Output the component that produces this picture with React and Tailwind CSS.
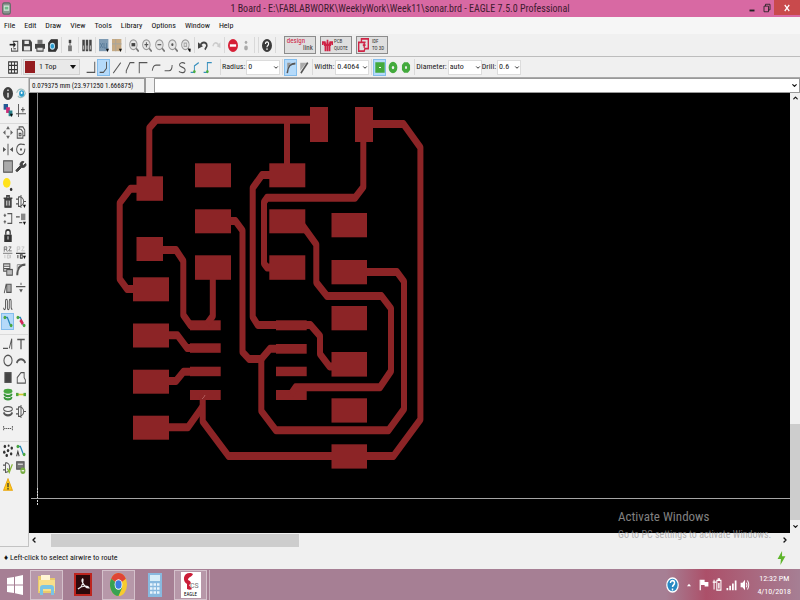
import React from "react";
import {
  ChevronDown,
  ChevronLeft,
  ChevronRight,
  ChevronUp,
  Wrench,
} from "lucide-react";

const uiFont = "font-['Roboto_Condensed','Open_Sans_Condensed','Roboto',sans-serif]";

const menus = [
  "File",
  "Edit",
  "Draw",
  "View",
  "Tools",
  "Library",
  "Options",
  "Window",
  "Help",
];

// x, y, width, height
const pads = [
  [310, 107, 18, 35],
  [355, 107, 18, 35],
  [136.5, 176.3, 26.5, 24.5],
  [136.5, 237, 26.5, 24],
  [133, 277.3, 36, 24],
  [133, 323.5, 36, 24],
  [133, 369.7, 36, 24],
  [133, 415.7, 36, 24],
  [195, 163.3, 36, 24],
  [195, 209.3, 36, 24],
  [195, 255.3, 36, 24.5],
  [269.3, 163.3, 36, 24],
  [269.3, 209.3, 36, 24],
  [269.3, 255.3, 36, 24.5],
  [331.5, 213, 35.5, 24.3],
  [331.5, 260, 35.5, 24.3],
  [331.5, 306, 35.5, 24.3],
  [331.5, 352, 35.5, 24.6],
  [331.5, 398.3, 35.5, 24.3],
  [331.5, 444.3, 35.5, 24.3],
  [190, 320.3, 30.7, 10],
  [190, 343.3, 30.7, 9.5],
  [190, 366.7, 30.7, 9.5],
  [190, 390, 30.7, 10],
  [276, 320.3, 30.7, 10],
  [276, 344, 30.7, 9.7],
  [276, 366.7, 30.7, 9.5],
  [276, 390, 30.7, 10],
];

const traces = [
  [[149.3, 177], [149.3, 128], [156.5, 119.7], [311, 119.7]],
  [[287, 120], [287, 165]],
  [[138, 188.7], [130.5, 188.7], [119.7, 203], [119.7, 279], [127, 289], [134, 289]],
  [[162, 250], [176, 250], [183.3, 261], [183.3, 315], [190.5, 325.3], [193, 325.3]],
  [[212.8, 279], [212.8, 316], [207, 324]],
  [[230, 221], [235.5, 221], [242.5, 230.5], [242.5, 352], [249, 359], [261.3, 359], [270, 348.7], [278, 348.7]],
  [[261.3, 358], [261.3, 411], [276, 430.3], [388.5, 430.3], [404, 409], [404, 281.5], [397, 272], [366, 272]],
  [[271, 175], [262, 175], [252.7, 188], [252.7, 317], [257.7, 325], [310.5, 325], [320, 336], [320, 354], [329.5, 366.5], [333, 366.5]],
  [[363.3, 141], [363.3, 187], [355, 197.8], [267, 197.8], [264, 202], [264, 263.5], [267, 267.5], [271, 267.5]],
  [[303, 226], [316.3, 244.5], [316.3, 282.5], [327, 296], [381.5, 296], [391, 308.5], [391, 371], [380, 387.3], [295.5, 387.3], [291, 394]],
  [[372, 124], [403.5, 124], [420.4, 147.5], [420.4, 419.5], [393.5, 456], [228.5, 456], [202.7, 421.5], [202.7, 396]],
  [[168, 427.3], [188, 427.3], [202.7, 406.5]],
  [[168, 335.3], [177.5, 335.3], [187, 348], [192, 348]],
  [[168, 381], [176, 381], [183.5, 371.7], [192, 371.7]],
];

const SX = 0.75;
const toPoints = (pts) => pts.map(([x, y]) => `${x / SX},${y}`).join(" ");

function Board() {
  return (
    <svg
      viewBox="29 93 761 440"
      preserveAspectRatio="xMinYMin meet"
      className="block h-full w-full"
      role="img"
      aria-label="sonar.brd"
    >
      <path d="M37.5 93V498" stroke="#8a8a8a" />
      <path d="M37.5 488V505" stroke="#ddd" strokeDasharray="2 1" />
      <path d="M31 498.5H790" stroke="#a5a5a5" />
      <g fill="#8c2426">
        {pads.map(([x, y, w, h]) => (
          <rect key={`${x}-${y}`} x={x} y={y} width={w} height={h} />
        ))}
      </g>
      <g
        transform={`scale(${SX} 1)`}
        fill="none"
        stroke="#8c2426"
        strokeWidth="8"
        strokeLinejoin="round"
      >
        {traces.map((pts, i) => (
          <polyline key={i} points={toPoints(pts)} />
        ))}
      </g>
      <path d="M202 399L204 397L205 395" stroke="#b66" strokeWidth="0.8" fill="none" />
    </svg>
  );
}

function Ico({ children, className = "h-[13px] w-[13px]" }) {
  return (
    <svg
      viewBox="0 0 16 16"
      preserveAspectRatio="none"
      className={className}
      fill="none"
      stroke="#555"
      strokeWidth="1.5"
      aria-hidden="true"
    >
      {children}
    </svg>
  );
}

const more = <path d="M11 12h5l-2.500 4z" fill="#111" stroke="none" />;

const magnifier = (inner) => (
  <>
    <circle cx="7" cy="7" r="6" stroke="#999" strokeWidth="1.400" fill="#e6e6e6" />
    <path d="M11.500 11.500L15.500 15.500" stroke="#777" strokeWidth="2.400" />
    {inner}
  </>
);

const mainTools = [
  ["Open", <><path d="M6 3H14V15H4V11" /><path d="M1 7H9" stroke="#222" strokeWidth="2" /><path d="M7 3L11 7L7 11z" fill="#222" stroke="none" /><path d="M7 12h4" /></>],
  ["Save", <><path d="M0 1H13L16 4V15H0z" fill="#444" stroke="none" /><path d="M4 2H11V6H4zM3 9H13V14H3z" fill="#e8e8e8" stroke="none" /></>],
  ["Print", <><path d="M4 1H12V6H4z" fill="#777" stroke="none" /><path d="M0 6H16V12H0z" fill="#444" stroke="none" /><path d="M3 10H13V15H3z" fill="#ddd" stroke="#444" /></>],
  ["CAM", <><path d="M1 5L5 1H15V11L12 15H1z" fill="#333" stroke="#333" /><circle cx="7" cy="9" r="3.500" fill="#2a9dd0" stroke="#bde" /></>],
  null,
  ["Board", <><rect x="6" y="1" width="4" height="4" fill="#444" stroke="none" /><rect x="5" y="8" width="6" height="7" fill="#777" stroke="none" /><path d="M8 5V8" /></>],
  null,
  ["Library", <><path d="M2.500 1V15M8 1V15M13.500 1V15" stroke="#444" strokeWidth="4" /><path d="M2.500 8V13M8 8V13M13.500 8V13" stroke="#bbb" /></>],
  null,
  ["Script", <><rect width="15" height="15" x="0" y="0" fill="#7f9bb3" stroke="none" /><path d="M2 5L6 11M6 5L2 11M8 5V11H12V5" stroke="#4e7392" strokeWidth="1" />{more}</>],
  ["Run ULP", <><rect width="15" height="15" x="0" y="0" fill="#c6aa83" stroke="none" /><path d="M0 6H15M6 0V15" stroke="#aaa69b" />{more}</>],
  null,
  ["Fit", magnifier(<rect x="4" y="5" width="6" height="4" fill="#444" stroke="none" />)],
  ["Zoom in", magnifier(<path d="M4 7H10M7 4V10" />)],
  ["Zoom out", magnifier(<path d="M4 7H10" />)],
  ["Redraw", magnifier(<circle cx="7" cy="7" r="1" fill="#444" />)],
  ["Select", magnifier(<><path d="M5 5H9V9H5z" stroke="#aaa" />{more}</>)],
  null,
  ["Undo", <><path d="M4 7C9 2 15 5 14 9L11 13" stroke="#444" strokeWidth="2.500" /><path d="M0 4V12L8 9z" fill="#444" stroke="none" /></>],
  ["Redo", <><path d="M12 7C8 3 4 5 3 9" stroke="#ccc" strokeWidth="2" /><path d="M15 4V11L9 9z" fill="#ccc" stroke="none" /></>],
  null,
  ["Stop", <><circle cx="8" cy="8" r="8" fill="#d61f36" stroke="none" /><path d="M3 8H13" stroke="#fff" strokeWidth="3" /></>],
  ["Go", <><circle cx="8" cy="4" r="2" fill="#aaa" stroke="none" /><circle cx="8" cy="11" r="3" fill="#aaa" stroke="none" /></>],
  null,
  null,
  ["Help", <><circle cx="8" cy="8" r="8" fill="#3b3b3b" stroke="none" /><path d="M5.500 6C5.500 2.500 11 3 10.500 6C10.500 8 8 8 8 10M8 11.500V13.500" stroke="#fff" strokeWidth="1.800" /></>],
];

const bends = [
  ["Bend 0", <path d="M1 14H14V1" />],
  ["Bend 1", <path d="M1 14H7L12 9V1" />, true],
  ["Bend 2", <path d="M2 15L14 2" />],
  ["Bend 3", <path d="M2 15V12L8 2H15" />],
  ["Bend 4", <path d="M2 15V2H15" />],
  ["Bend 5", <path d="M2 12C3 7 5 5 8 5H15" />],
  ["Bend 6", <path d="M1 12H8C12 12 13 9 13 5" />],
  ["Bend 7", <path d="M13 3C9 1 4 2 4 5C4 8 13 7 13 11C13 15 7 15 3 13" />],
  ["Bend 8", <><path d="M1 14H7V6L14 2" stroke="#368fbd" /><circle cx="7" cy="13" r="2" fill="#4caf3f" stroke="none" /></>],
  ["Bend 9", <><path d="M1 14H7V2H14" stroke="#368fbd" /><circle cx="7" cy="13" r="2" fill="#4caf3f" stroke="none" /></>],
];

const route = (
  <>
    <path d="M3 3H7L12 13" stroke="#2585b8" strokeWidth="2" />
    <circle cx="3" cy="3" r="2.200" fill="#4ba73e" stroke="none" />
    <circle cx="13" cy="13" r="2.200" fill="#4ba73e" stroke="none" />
  </>
);

const gate = (
  <path d="M4 2V14C15 14 15 2 4 2M0 5H4M0 11H4M12 8H16M8 0V16" />
);

const sideGroups = [
  {
    size: "h-[34px]",
    tools: [
      ["Info", <><circle cx="8" cy="8" r="8" fill="#3d3d3d" stroke="none" /><path d="M8 3V5M8 7V13" stroke="#fff" strokeWidth="2" /></>],
      ["Show", <><path d="M1 7C4 1 13 1 15 8C12 14 5 14 3 11" stroke="#9bb" /><circle cx="9" cy="8" r="4" fill="#2a9bcb" stroke="none" /><circle cx="9" cy="7" r="1.500" fill="#fff" stroke="none" /></>],
      ["Display", <><rect x="1" y="0" width="7" height="7" fill="#235a94" stroke="none" /><rect x="5" y="4" width="6" height="7" fill="#cd2c79" stroke="none" /><rect x="9" y="8" width="6" height="7" fill="#27818a" stroke="none" />{more}</>],
      ["Mark", <path d="M4 0V16M0 12H16M11 4V10M8 7H14" />],
    ],
  },
  {
    size: "h-[207px]",
    tools: [
      ["Move", <path d="M8 0L11 4H5zM8 16L5 12H11zM0 8L4 5V11zM16 8L12 5V11z" fill="#666" stroke="none" />],
      ["Copy", <path d="M5 4V1H11L14 5V12H11M2 4H8L11 7V15H2zM5 9H8V12H5z" />],
      ["Mirror", <><path d="M8 1V15" /><path d="M0 5V11L5 8zM16 5V11L11 8z" fill="#555" stroke="none" /></>],
      ["Rotate", <><path d="M14 7A6.500 6.500 0 1 1 9 1.500L14 2" /><circle cx="8" cy="8" r="1.500" fill="#555" stroke="none" /></>],
      ["Group", <rect x="1" y="1" width="14" height="14" fill="#aaa" />],
      ["Change", <Wrench className="h-[13px] w-[12px] fill-[#444] text-[#444]" strokeWidth={2} />],
      ["Paste", <><circle cx="6" cy="6" r="6" fill="#ffe21b" stroke="none" /><circle cx="13" cy="14" r="2" fill="#333" stroke="none" /></>],
      null,
      ["Delete", <><path d="M1 4H15M6 4V1H10V4" stroke="#444" strokeWidth="2" /><path d="M3 5H13V15H3z" fill="#555" stroke="#333" /><path d="M6 7V13M10 7V13" stroke="#ddd" /></>],
      ["Add", <>{gate}{more}</>],
      ["Pinswap", <path d="M7 2H14V14H7M3 2V6M3 10V14M1 4H5M1 12H5" />],
      ["Replace", <><rect x="8" y="2" width="7" height="8" fill="#888" stroke="none" /><path d="M0 6H6M5 13H10" />{more}</>],
      ["Lock", <><path d="M4.500 7V4C4.500 0 11.500 0 11.500 4V7" stroke="#333" strokeWidth="2" /><rect x="2" y="7" width="12" height="9" fill="#333" stroke="none" /><path d="M8 9V13" stroke="#eee" /></>],
      null,
      ["Name", <><path d="M2 7V1H6V4H2M5 4L7 7M9 1H13L9 6H14M0 9H15" strokeWidth="1" /><path d="M3 11V15M7 11H10V15H7zM12 11V15" strokeWidth="1" stroke="#bbb" /></>],
      ["Value", <><path d="M2 7V1H6V4H2M9 1H13L9 6H14" stroke="#bbb" strokeWidth="1" /><path d="M0 9H15M3 11V15M7 11H10V15H7z" stroke="#444" />{more}</>],
      ["Smash", <><path d="M1 1H11V10H1zM1 4H11M1 7H11" /><rect x="6" y="8" width="9" height="7" fill="#bbb" /></>],
      ["Miter", <><path d="M2 15C2 6 7 2 15 2" strokeWidth="3" /><path d="M2 2H8M2 2V9" stroke="#999" /></>],
      ["Split", <path d="M2 15L5 4H13V14H6V5" fill="#aaa" />],
      ["Optimize", <><path d="M0 7H15M8 2V5" /><path d="M5 10H11L8 14z" fill="#555" stroke="none" /></>],
      ["Meander", <path d="M1 12C1 15 4 15 4 12V4C4 1 7 1 7 4V12C7 15 10 15 10 12V4C10 1 13 1 13 4V11C13 13 14 14 15 14" />],
      null,
      ["Route", route, true],
      ["Ripup", <>{route}<path d="M7 6L11 11" stroke="#d52955" strokeWidth="4" /></>],
    ],
  },
  {
    size: "h-[103px]",
    tools: [
      ["Wire", <path d="M0 14H8M10 14L14 2V15" />],
      ["Text", <path d="M2 3H14M8 3V15" strokeWidth="2" />],
      ["Circle", <circle cx="8" cy="8" r="6.500" strokeWidth="1.700" />],
      ["Arc", <path d="M1 11C4 5 12 5 15 11" strokeWidth="2.500" />],
      ["Rect", <rect x="3" y="2" width="10" height="12" fill="#444" />],
      ["Polygon", <path d="M2 15V8L8 2H13V8L15 11V15z" />],
      ["Via", <><ellipse cx="8" cy="4" rx="7" ry="3" fill="#49a841" stroke="none" /><path d="M2 7C3 11 13 11 14 7M2 11C3 15 13 15 14 11" stroke="#39963b" strokeWidth="2.500" /></>],
      ["Signal", <><path d="M3 8H13" stroke="#d2ca2d" strokeWidth="2" /><rect x="0" y="6" width="4" height="4" fill="#53a53a" stroke="none" /><rect x="12" y="6" width="4" height="4" fill="#53a53a" stroke="none" /></>],
      ["Hole", <><ellipse cx="8" cy="5" rx="7" ry="3" /><path d="M1 9C3 14 13 14 15 9" strokeWidth="2.500" /></>],
      ["Attribute", gate],
      ["Dimension", <path d="M1 5V11M15 5V11M2 8H14" strokeDasharray="2 1" />],
      null,
    ],
  },
  {
    size: "h-[52px]",
    tools: [
      ["Ratsnest", <g fill="#333" stroke="none"><circle cx="3" cy="3" r="2" /><circle cx="9" cy="2" r="1.500" /><circle cx="14" cy="5" r="2" /><circle cx="8" cy="8" r="2" /><circle cx="2" cy="10" r="2" /><circle cx="6" cy="14" r="2" /><circle cx="13" cy="12" r="2" /></g>],
      ["Autorouter", <>{route}<path d="M1 15L3 9L5 15" stroke="#333" /></>],
      ["ERC", <><path d="M4 2V14C13 14 13 2 4 2M0 5H4M0 11H4" /><path d="M7 9L10 14L15 4" stroke="#87b733" strokeWidth="2" /></>],
      ["DRC", <><rect x="1" y="1" width="12" height="9" fill="#777" /><path d="M3 4H11" stroke="#ddd" /><circle cx="11" cy="12" r="4" fill="#76ac42" stroke="none" /><path d="M9 12H13" stroke="#fff" /></>],
      ["Errors", <><path d="M8 1L15 15H1z" fill="#ffcd16" stroke="#e9a613" /><path d="M8 6V11M8 12V14" stroke="#333" strokeWidth="2" /></>],
    ],
  },
];

function Tool({ tool, className }) {
  if (!tool) return <span className={className} />;
  const [label, art, active] = tool;
  const isIcon = typeof art.type === "object";
  return (
    <button
      type="button"
      aria-label={label}
      title={label}
      className={`flex items-center justify-center ${className} ${
        active ? "bg-[#b5dafa] ring-1 ring-inset ring-[#84bdec]" : ""
      }`}
    >
      {isIcon ? art : <Ico className="h-[13px] w-[10px]">{art}</Ico>}
    </button>
  );
}

function Separator() {
  return (
    <span className="flex h-full w-1 shrink-0 items-center justify-center">
      <span className="h-4 w-px bg-[#d9d9d9]" />
    </span>
  );
}

function Field({ label, value, className }) {
  return (
    <label className="flex items-center gap-px">
      {label}
      <span className={`relative flex ${className}`}>
        <select className="h-[15px] w-full appearance-none border border-[#dcdcdc] bg-white pl-px">
          <option>{value}</option>
        </select>
        <ChevronDown
          className="pointer-events-none absolute top-1 right-px h-[7px] w-[6px] text-[#333]"
          strokeWidth={4}
        />
      </span>
    </label>
  );
}

function TitleBar() {
  return (
    <header className="flex h-[17px] shrink-0 items-center bg-[#d869a3] text-[#3f1c30]">
      <div className="flex w-14 pl-[2px]">
        <Ico className="h-[13px] w-[9px]">
          <rect x="1" y="1" width="14" height="14" rx="3" fill="#8a9590" stroke="#5c6b64" />
          <path d="M4 5H12V10H4z" fill="#72b98a" stroke="#d4e8dc" />
        </Ico>
      </div>
      <h1 className="flex-1 text-center text-[10px] leading-4">
        1 Board - E:\FABLABWORK\WeeklyWork\Week11\sonar.brd - EAGLE 7.5.0
        Professional
      </h1>
      <div className="flex h-full w-14 items-start">
        <button type="button" aria-label="Minimize" className="flex h-[15px] w-[15px] items-center justify-center">
          <Ico className="h-[10px] w-[10px]"><path d="M4 12H12" stroke="#222" strokeWidth="3" /></Ico>
        </button>
        <button type="button" aria-label="Restore" className="flex h-[15px] w-[15px] items-center justify-center">
          <Ico className="h-[10px] w-[8px]"><path d="M2 5H11V14H2zM5 5V2H14V11H11" stroke="#222" /></Ico>
        </button>
        <button type="button" aria-label="Close" className="flex h-[15px] w-[26px] items-center justify-center bg-[#c94a4c]">
          <Ico className="h-[8px] w-[6px]"><path d="M2 2L14 14M14 2L2 14" stroke="#fff" strokeWidth="3.500" /></Ico>
        </button>
      </div>
    </header>
  );
}

function MainToolbar() {
  return (
    <div className="flex h-[23px] shrink-0 items-center border-b border-[#bdbdbd] bg-[#f0f0f0] pl-[7px]">
      {mainTools.map((tool, i) =>
        tool ? <Tool key={i} tool={tool} className="h-[15px] w-[13px]" /> : <Separator key={i} />
      )}
      <Separator />
      <div className="ml-[7px] flex gap-1 text-[5px] leading-[7px] whitespace-nowrap text-[#333]">
        <button type="button" className="h-[18px] w-[32px] border border-[#8c8c8c] bg-[#dfdfdf] text-[7px]">
          <span className="block pr-2 text-[#cf2345]">design</span>
          <span className="block pl-4">link</span>
        </button>
        <button type="button" className="flex h-[18px] w-[32px] items-center gap-px border border-[#8c8c8c] bg-[#dfdfdf] pl-px text-left">
          <Ico className="h-[14px] w-[11px] shrink-0">
            <path d="M1 8V5H4V8H12V5H15V8M5 15V5M8 15V2M11 15V5" stroke="#cf2345" strokeWidth="2.500" />
          </Ico>
          <span>
            <span className="block">PCB</span>
            <span className="block">QUOTE</span>
          </span>
        </button>
        <button type="button" className="flex h-[18px] w-[32px] items-center gap-[3px] border border-[#8c8c8c] bg-[#dfdfdf] pl-px text-left">
          <Ico className="h-[14px] w-[11px] shrink-0">
            <path d="M5 1H15V12H10L9 15H1V5H5zM5 5H11M7 8H11M9 4V11" stroke="#cf2345" strokeWidth="2" />
          </Ico>
          <span>
            <span className="block">IDF</span>
            <span className="block">TO 3D</span>
          </span>
        </button>
      </div>
    </div>
  );
}

function RouteToolbar() {
  return (
    <div className="flex h-[21px] shrink-0 items-center border-b border-[#a9a9a9] bg-[#f0f0f0] pl-[6px] text-[8px] leading-3 text-[#222]">
      <Tool
        tool={["Grid", <path d="M1 1H15V15H1zM1 5.500H15M1 10.500H15M5.500 1V15M10.500 1V15" stroke="#333" />]}
        className="h-4 w-[13px]"
      />
      <Separator />
      <div className="relative mr-1 flex h-4 w-[57px] items-center border border-[#d0d0d0] bg-[#e9e9e9] pl-px">
        <span className="h-3 w-[10px] shrink-0 bg-[#941c20]" />
        <select aria-label="Layer" className="w-full appearance-none pl-1">
          <option>1 Top</option>
        </select>
        <svg viewBox="0 0 6 4" className="pointer-events-none absolute right-[3px] h-1 w-[6px]" aria-hidden="true">
          <path d="M0 0H6L3 4z" fill="#111" />
        </svg>
      </div>
      <div className="mr-1 flex">
        {bends.map((tool) => (
          <Tool key={tool[0]} tool={tool} className="h-[17px] w-[13px]" />
        ))}
      </div>
      <Separator />
      <Field label="Radius:" value="0" className="w-[34px]" />
      <Separator />
      <Tool tool={["Round miter", <><path d="M2 2H8L2 9z" fill="#999" stroke="none" /><path d="M2 15C3 6 7 3 15 3" strokeWidth="2.500" /></>, true]} className="h-[17px] w-[13px]" />
      <Tool tool={["Straight miter", <><path d="M2 2H12L2 12z" fill="#aaa" stroke="none" /><path d="M3 15L14 2" strokeWidth="2.500" /></>]} className="h-[17px] w-[13px]" />
      <Separator />
      <Field label="Width:" value="0.4064" className="w-[34px]" />
      <Separator />
      <Tool tool={["Square via", <path d="M3.500 4.500H12.500V11.500H3.500z" stroke="#43aa3d" strokeWidth="6" fill="#fff" />, true]} className="h-[17px] w-[13px]" />
      <Tool tool={["Round via", <circle cx="8" cy="8" r="4.500" stroke="#43aa3d" strokeWidth="5" />]} className="h-[17px] w-[13px]" />
      <Tool tool={["Octagon via", <path d="M6 4H10L12 6V10L10 12H6L4 10V6z" stroke="#43aa3d" strokeWidth="5" />]} className="h-[17px] w-[13px]" />
      <Separator />
      <Field label="Diameter:" value="auto" className="w-[34px]" />
      <Field label="Drill:" value="0.6" className="w-[24px]" />
    </div>
  );
}

function Sidebar() {
  return (
    <aside className="flex w-[29px] shrink-0 flex-col gap-1 border-r border-b border-[#c3c3c3] bg-[#f1f1f1] pt-[7px]">
      {sideGroups.map(({ size, tools }, i) => (
        <div
          key={i}
          className={`grid shrink-0 auto-rows-fr grid-cols-[13px_13px] pl-px ${size} ${
            i > 0 ? "border-t border-[#dadada]" : ""
          }`}
        >
          {tools.map((tool, j) => (
            <Tool key={j} tool={tool} className="w-[13px]" />
          ))}
        </div>
      ))}
    </aside>
  );
}

function TaskButton({ label, open, children }) {
  return (
    <button
      type="button"
      aria-label={label}
      className={`flex h-[30px] w-[33px] items-center justify-center ${
        open ? "border border-white/40 bg-white/20" : ""
      }`}
    >
      {children}
    </button>
  );
}

function Taskbar() {
  return (
    <footer className="flex h-[31px] shrink-0 items-center bg-[#a67f94] text-white">
      <button type="button" aria-label="Start" className="flex w-[30px] justify-center">
        <svg viewBox="0 0 16 20" className="h-5 w-4" fill="#fff" aria-hidden="true">
          <path d="M0 3L7 2V9.500H0zM8 1.800L16 0V9.500H8zM0 10.500H7V18L0 17zM8 10.500H16V20L8 18.200z" />
        </svg>
      </button>
      <div className="flex gap-[3px]">
        <TaskButton label="File Explorer" open>
          <svg viewBox="0 0 20 24" className="h-6 w-5" aria-hidden="true">
            <path d="M1 3H7L8 5H18V20H1z" fill="#e9ca6c" />
            <path d="M4 2H13V8H4z" fill="#fff5d4" />
            <path d="M2 7H18V18H2z" fill="#f8df8b" />
            <path d="M3 22V15Q3 12 6 12H14Q17 12 17 15V22H14V16H6V22z" fill="#79c4e5" />
          </svg>
        </TaskButton>
        <TaskButton label="Adobe Reader">
          <svg viewBox="0 0 18 23" className="h-[23px] w-[18px]" aria-hidden="true">
            <path d="M0 0H18V23H0z" fill="#bd241e" />
            <path d="M2 2H16V21H2z" fill="#2d090b" />
            <path d="M4 16C7 15 9 11 9 7C9 5 8 6 8 8C9 12 12 15 15 15C14 12 7 13 4 16z" fill="none" stroke="#eee" strokeWidth="1.200" />
          </svg>
        </TaskButton>
        <TaskButton label="Chrome" open>
          <svg viewBox="0 0 24 24" preserveAspectRatio="none" className="h-[23px] w-[17px]" aria-hidden="true">
            <circle cx="12" cy="12" r="12" fill="#f7cb2d" />
            <path d="M12 12L1.600 6A12 12 0 0 1 22.400 6z" fill="#df4536" />
            <path d="M12 12L1.600 6A12 12 0 0 0 12 24L17.200 15z" fill="#38a153" />
            <circle cx="12" cy="12" r="5.500" fill="#fff" />
            <circle cx="12" cy="12" r="4.400" fill="#3b7ce2" />
          </svg>
        </TaskButton>
        <TaskButton label="Calculator">
          <svg viewBox="0 0 14 24" className="h-6 w-[14px]" aria-hidden="true">
            <path d="M0 0H14V24H0z" fill="#88b9df" />
            <path d="M2 2H12V8H2z" fill="#d6edf8" />
            <path d="M2 11.500H12M2 15.500H12M2 19.500H12" stroke="#e7f4fd" strokeWidth="2.500" strokeDasharray="2.500 1" />
          </svg>
        </TaskButton>
        <div className="flex gap-px">
          <TaskButton label="EAGLE" open>
            <span className="flex h-[26px] w-5 flex-col items-center bg-white text-[5px] leading-[6px] text-black">
              <svg viewBox="0 0 20 19" className="h-[19px] w-5" aria-hidden="true">
                <path d="M10 1C2 0 1 9 6 12L6 17C8 18 10 18 11 17L8 13C11 12 10 9 7 8C7 5 11 5 12 2z" fill="#cb1c38" />
                <text x="9" y="16" fontSize="8" fill="#777">CS</text>
              </svg>
              EAGLE
            </span>
          </TaskButton>
          <span className="h-[30px] w-[2px] border-r border-white/40" />
        </div>
      </div>
      <div className="ml-auto flex h-full items-center gap-[3px] bg-linear-to-r from-transparent via-[#b0304c]/60 via-30% to-transparent pr-[9px]">
        <Ico className="h-4 w-[13px]"><circle cx="8" cy="8" r="7" fill="#2789c3" stroke="#fff" /><path d="M5.500 6C5.500 2.500 11 3 10.500 6C10.500 8 8 8 8 10M8 11.500V13.500" stroke="#fff" strokeWidth="1.800" /></Ico>
        <svg viewBox="0 0 10 6" className="mx-[5px] h-1 w-1" aria-hidden="true"><path d="M5 0L10 6H0z" fill="#fff" /></svg>
        <Ico className="h-3 w-[10px]"><path d="M2 1V15" stroke="#fff" strokeWidth="2" /><path d="M3 1H9V4H15V10H9V8H3z" fill="#fff" stroke="none" /></Ico>
        <Ico className="h-[13px] w-[11px]"><path d="M7 3H13V15H7zM9 3V1H11V3M1 5H6M3 2V14" stroke="#fff" /><path d="M9 6H11V13H9z" fill="#fff" stroke="none" /></Ico>
        <Ico className="h-3 w-[11px]"><path d="M2 12V15M6 9V15M10 6V15M14 2V15" stroke="#fff" strokeWidth="2.500" /></Ico>
        <Ico className="h-3 w-[10px]"><path d="M1 5H4L8 1V15L4 11H1z" fill="#fff" stroke="none" /><path d="M10 5Q12 8 10 11M12 2Q16 8 12 14" stroke="#fff" /></Ico>
        <time className="ml-1 text-center text-[8px] leading-[13px]">
          <span className="block">12:32 PM</span>
          <span className="block">4/10/2018</span>
        </time>
      </div>
    </footer>
  );
}

export default function App() {
  return (
    <div className={`flex h-screen flex-col overflow-hidden bg-[#f0f0f0] text-[#111] ${uiFont}`}>
      <TitleBar />
      <nav className="flex h-[17px] shrink-0 items-center gap-[9px] bg-[#f6f6f6] pt-px pl-1 text-[8px] leading-3">
        {menus.map((menu) => (
          <button key={menu} type="button">
            {menu}
          </button>
        ))}
      </nav>
      <MainToolbar />
      <RouteToolbar />
      <div className="flex min-h-0 flex-1">
        <Sidebar />
        <main className="flex min-w-0 flex-1 flex-col">
          <div className="flex h-[15px] shrink-0 items-stretch whitespace-nowrap">
            <output className="w-[116px] border border-[#999] bg-[#f0f0f0] pl-[2px] text-[7px] leading-[14px]">
              0.079375 mm (23.971250 1.666875)
            </output>
            <span className="w-[9px] border-l border-[#999] bg-[#f0f0f0]" />
            <div className="relative flex flex-1 border border-[#999] bg-white">
              <input aria-label="Command" className="w-full text-[8px] outline-none" />
              <ChevronDown className="absolute top-[3px] right-px h-[7px] w-[7px]" strokeWidth={4} />
            </div>
          </div>
          <div className="relative flex min-h-0 flex-1">
            <div className="min-w-0 flex-1 bg-black">
              <Board />
            </div>
            <div className="flex w-[10px] flex-col items-center justify-between bg-[#f0f0f0]">
              <ChevronUp className="h-[10px] w-[7px]" strokeWidth={4} />
              <span className="mt-auto h-24 w-full bg-[#cdcdcd]" />
              <ChevronDown className="h-[13px] w-[7px]" strokeWidth={4} />
            </div>
            <div className="absolute right-8 -bottom-[10px] w-[150px] whitespace-nowrap">
              <p className="text-[13px] leading-5 text-[#808080]">Activate Windows</p>
              <p className="text-[10px] leading-4 text-[#999]/70">Go to PC settings to activate Windows.</p>
            </div>
          </div>
          <div className="flex h-[14px] shrink-0 items-center justify-between pr-[11px]">
            <ChevronLeft className="h-2 w-[10px]" strokeWidth={4} />
            <span className="mr-auto ml-3 h-[13px] w-[248px] bg-[#cdcdcd]" />
            <ChevronRight className="h-2 w-2" strokeWidth={4} />
          </div>
        </main>
      </div>
      <div className="flex h-[22px] shrink-0 items-center justify-between pr-[14px] pl-1 text-[8px] leading-3">
        <p>♦ Left-click to select airwire to route</p>
        <Ico className="h-[14px] w-[9px]"><path d="M9 0L1 9H7L6 16L15 6H9z" fill="#5eb52b" stroke="none" /></Ico>
      </div>
      <Taskbar />
    </div>
  );
}
